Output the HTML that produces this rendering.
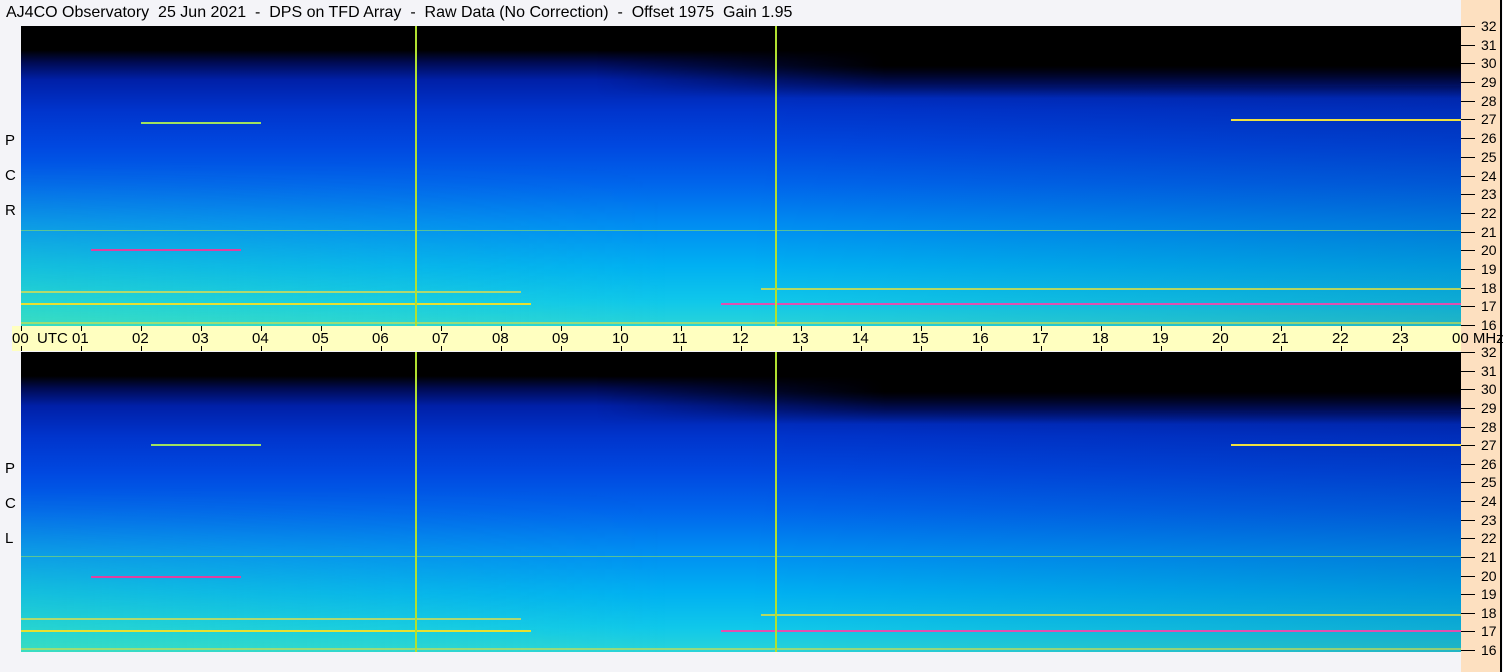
<!DOCTYPE html>
<html><head><meta charset="utf-8"><style>
body{margin:0;width:1503px;height:672px;background:#f4f4f8;position:relative;overflow:hidden;font-family:"Liberation Sans",sans-serif}
.t{position:absolute;left:6px;top:4px;font-size:16px;color:#000;white-space:pre}
.p{position:absolute;left:21px;width:1440px;overflow:hidden}
.g{position:absolute;inset:0;background:linear-gradient(to bottom,#000 0,#000 8%,#000a50 12%,#0020a8 18%,#0034cc 28%,#0048e0 40%,#0066ec 53%,#008cf2 66%,#00b0f2 80%,#10c8ea 92%,#28d4d8 100%)}
.r{position:absolute;left:0;right:0;top:45%;bottom:0;background:linear-gradient(to right,rgba(90,240,150,.35) 0,rgba(90,240,150,.15) 25%,rgba(0,0,0,0) 45%,rgba(0,0,0,0) 100%);-webkit-mask-image:linear-gradient(to bottom,transparent,#000);mask-image:linear-gradient(to bottom,transparent,#000)}
.k{position:absolute;left:0;right:0;top:0;height:24%;background:linear-gradient(to bottom,#000 0,#000 55%,rgba(0,0,30,.6) 80%,rgba(0,0,0,0) 100%);-webkit-mask-image:linear-gradient(to right,transparent 40%,#000 60%);mask-image:linear-gradient(to right,transparent 40%,#000 60%)}
.d{position:absolute;left:0;right:0;top:20%;bottom:0;background:linear-gradient(to right,rgba(0,0,0,0) 50%,rgba(0,10,80,.15) 100%)}
.v{position:absolute;top:0;bottom:0;width:2px;background:#b0e030}
.h{position:absolute;height:2px}
.ax{position:absolute;left:12px;top:326px;width:1449px;height:25px;background:#ffffc0}
.ax span{position:absolute;top:4px;font-size:15px;white-space:pre}
.tk{position:absolute;width:1px;height:5px;background:#000}
.ry{position:absolute;left:1461px;top:0;width:39px;height:672px;background:#fde0c0;border-right:2px solid #000}
.ry span{position:absolute;left:20px;font-size:14px}
.ry i{position:absolute;left:0;width:14px;height:1px;background:#000}
.lab{position:absolute;left:5px;font-size:15px}
.mhz{position:absolute;left:1452px;top:330px;font-size:15px;z-index:3;white-space:pre}
</style></head><body>
<div class="t">AJ4CO Observatory  25 Jun 2021  -  DPS on TFD Array  -  Raw Data (No Correction)  -  Offset 1975  Gain 1.95</div>
<div class="p" style="top:26px;height:300px"><div class="g"></div><div class="r"></div><div class="d"></div><div class="k"></div>
<div class="h" style="top:96px;left:120px;width:120px;background:#a0e060"></div>
<div class="h" style="top:204px;left:0;width:1440px;height:1px;background:#90e060;opacity:.6"></div>
<div class="h" style="top:223px;left:70px;width:150px;background:#e040a0"></div>
<div class="h" style="top:265px;left:0;width:500px;background:#f0e040;opacity:.7"></div>
<div class="h" style="top:277px;left:0;width:510px;background:#e8e030"></div>
<div class="h" style="top:277px;left:700px;width:740px;background:#e050b0"></div>
<div class="h" style="top:262px;left:740px;width:700px;background:#e0e040;opacity:.8"></div>
<div class="h" style="top:93px;left:1210px;width:230px;background:#f0e040"></div>
<div class="h" style="top:296px;left:0;width:1440px;background:#e0e040;opacity:.6"></div>
<div class="v" style="left:394px"></div><div class="v" style="left:754px"></div></div>
<div class="p" style="top:352px;height:300px"><div class="g"></div><div class="r"></div><div class="d"></div><div class="k"></div>
<div class="h" style="top:92px;left:130px;width:110px;background:#a0e060"></div>
<div class="h" style="top:204px;left:0;width:1440px;height:1px;background:#90e060;opacity:.6"></div>
<div class="h" style="top:224px;left:70px;width:150px;background:#e040a0"></div>
<div class="h" style="top:266px;left:0;width:500px;background:#f0e040;opacity:.7"></div>
<div class="h" style="top:278px;left:0;width:510px;background:#e8e030"></div>
<div class="h" style="top:278px;left:700px;width:740px;background:#e050b0"></div>
<div class="h" style="top:262px;left:740px;width:700px;background:#e0e040;opacity:.8"></div>
<div class="h" style="top:92px;left:1210px;width:230px;background:#f0e040"></div>
<div class="h" style="top:296px;left:0;width:1440px;background:#e0e040;opacity:.6"></div>
<div class="v" style="left:394px"></div><div class="v" style="left:754px"></div></div>
<div class="lab" style="top:132px">P</div><div class="lab" style="top:167px">C</div><div class="lab" style="top:202px">R</div>
<div class="lab" style="top:460px">P</div><div class="lab" style="top:495px">C</div><div class="lab" style="top:530px">L</div>
<div class="ax" id="ax"></div>
<div class="ry" id="ry"></div>
<div class="mhz">00 MHz</div>
<script>
var ax=document.getElementById('ax'),h='';
for(var i=0;i<=24;i++){var x=9+i*60;h+='<div class="tk" style="left:'+x+'px;top:0"></div><div class="tk" style="left:'+x+'px;top:20px"></div>';
if(i==24)continue;var s=(i<10?'0':'')+i;var lbl=i==0?'00  UTC':s;h+='<span style="left:'+(x-9)+'px">'+lbl+'</span>';}
ax.innerHTML=h;
var ry=document.getElementById('ry');h='';
[[26,325],[352,650]].forEach(function(p){for(var m=32;m>=16;m--){var y=p[0]+(32-m)*(p[1]-p[0])/16;h+='<i style="top:'+Math.round(y)+'px"></i><span style="top:'+Math.round(y-8)+'px">'+m+'</span>';}});
ry.innerHTML=h;
</script>
</body></html>
